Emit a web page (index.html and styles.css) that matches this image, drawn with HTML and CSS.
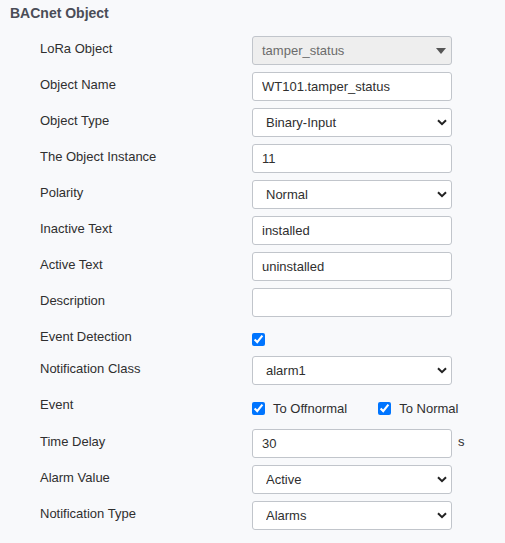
FILE: index.html
```html
<!DOCTYPE html>
<html>
<head>
<meta charset="utf-8">
<link rel="stylesheet" href="styles.css">
</head>
<body>
<div class="page">
  <div class="title">BACnet Object</div>
  <div class="form">
    <div class="row">
      <div class="label">LoRa Object</div>
      <div class="ctrl">
        <div class="fake-select disabled">tamper_status
          <svg class="tri" width="10" height="6" viewBox="0 0 10 6"><path d="M0 0H10L5 6Z" fill="#555"/></svg>
        </div>
      </div>
    </div>
    <div class="row">
      <div class="label">Object Name</div>
      <div class="ctrl"><input class="field" type="text" value="WT101.tamper_status"></div>
    </div>
    <div class="row">
      <div class="label">Object Type</div>
      <div class="ctrl sel"><select class="field select"><option>Binary-Input</option></select>
        <svg class="chev" width="10" height="7" viewBox="0 0 10 7"><path d="M1 1.2L5 5.2L9 1.2" fill="none" stroke="#222" stroke-width="2"/></svg></div>
    </div>
    <div class="row">
      <div class="label">The Object Instance</div>
      <div class="ctrl"><input class="field" type="text" value="11"></div>
    </div>
    <div class="row">
      <div class="label">Polarity</div>
      <div class="ctrl sel"><select class="field select"><option>Normal</option></select>
        <svg class="chev" width="10" height="7" viewBox="0 0 10 7"><path d="M1 1.2L5 5.2L9 1.2" fill="none" stroke="#222" stroke-width="2"/></svg></div>
    </div>
    <div class="row">
      <div class="label">Inactive Text</div>
      <div class="ctrl"><input class="field" type="text" value="installed"></div>
    </div>
    <div class="row">
      <div class="label">Active Text</div>
      <div class="ctrl"><input class="field" type="text" value="uninstalled"></div>
    </div>
    <div class="row">
      <div class="label">Description</div>
      <div class="ctrl"><input class="field" type="text" value=""></div>
    </div>
    <div class="row check-row">
      <div class="label">Event Detection</div>
      <div class="ctrl"><input class="cb cb-detect" type="checkbox" checked></div>
    </div>
    <div class="row">
      <div class="label">Notification Class</div>
      <div class="ctrl sel"><select class="field select"><option>alarm1</option></select>
        <svg class="chev" width="10" height="7" viewBox="0 0 10 7"><path d="M1 1.2L5 5.2L9 1.2" fill="none" stroke="#222" stroke-width="2"/></svg></div>
    </div>
    <div class="row event-row">
      <div class="label">Event</div>
      <div class="ctrl checks">
        <label class="check first"><input class="cb" type="checkbox" checked><span>To Offnormal</span></label>
        <label class="check"><input class="cb" type="checkbox" checked><span>To Normal</span></label>
      </div>
    </div>
    <div class="row">
      <div class="label">Time Delay</div>
      <div class="ctrl unit-ctrl"><input class="field" type="text" value="30"><span class="unit">s</span></div>
    </div>
    <div class="row">
      <div class="label">Alarm Value</div>
      <div class="ctrl sel"><select class="field select"><option>Active</option></select>
        <svg class="chev" width="10" height="7" viewBox="0 0 10 7"><path d="M1 1.2L5 5.2L9 1.2" fill="none" stroke="#222" stroke-width="2"/></svg></div>
    </div>
    <div class="row">
      <div class="label">Notification Type</div>
      <div class="ctrl sel"><select class="field select"><option>Alarms</option></select>
        <svg class="chev" width="10" height="7" viewBox="0 0 10 7"><path d="M1 1.2L5 5.2L9 1.2" fill="none" stroke="#222" stroke-width="2"/></svg></div>
    </div>
  </div>
</div>
</body>
</html>
```
FILE: styles.css
```css
* { box-sizing: border-box; }
html, body {
  margin: 0;
  background: #f8f9fb;
}
body {
  font-family: "Liberation Sans", Arial, sans-serif;
  font-size: 13px;
  color: #2f2f2f;
}
.page {
  padding: 5px 0 0 10px;
}
.title {
  font-size: 14px;
  font-weight: bold;
  line-height: 17px;
  color: #4a4d57;
  margin-bottom: 14px;
}
.form {
  display: flex;
  flex-direction: column;
  gap: 7px;
  padding-left: 30px;
}
.row {
  display: flex;
  height: 29px;
}
.label {
  width: 212px;
  line-height: 25px;
  color: #2f2f2f;
  flex: none;
}
.ctrl {
  position: relative;
  width: 200px;
  height: 29px;
  flex: none;
}
.field {
  display: block;
  width: 200px;
  height: 29px;
  margin: 0;
  border: 1px solid #c1c5cb;
  border-radius: 3px;
  background: #fff;
  font-family: "Liberation Sans", Arial, sans-serif;
  font-size: 13px;
  color: #2f2f2f;
  padding: 0 9px;
  outline: none;
}
.select {
  appearance: none;
  -webkit-appearance: none;
  padding-left: 13px;
}
.chev {
  position: absolute;
  right: 5px;
  top: 11px;
  pointer-events: none;
}
.fake-select {
  width: 200px;
  height: 29px;
  border: 1px solid #c1c5cb;
  border-radius: 3px;
  line-height: 27px;
  padding-left: 9px;
  position: relative;
}
.fake-select.disabled {
  background: #eeeeee;
  color: #6b6b6b;
}
.tri {
  position: absolute;
  right: 5px;
  top: 11px;
}
.check-row {
  height: 25px;
}
.check-row .ctrl {
  height: 25px;
}
.cb {
  width: 13px;
  height: 13px;
  margin: 0;
  accent-color: #0075ff;
}
.cb-detect {
  margin-top: 9px;
  display: block;
}
.event-row {
  height: 30px;
}
.checks {
  display: flex;
  align-items: flex-start;
  padding-top: 10px;
  height: 30px;
  width: 240px;
}
.check {
  display: flex;
  align-items: center;
  gap: 8px;
  height: 13px;
  line-height: 13px;
  color: #2f2f2f;
}
.check.first {
  margin-right: 31px;
}
.unit-ctrl {
  display: flex;
  width: 220px;
}
.unit {
  margin-left: 6px;
  line-height: 25px;
  color: #2f2f2f;
}
```
